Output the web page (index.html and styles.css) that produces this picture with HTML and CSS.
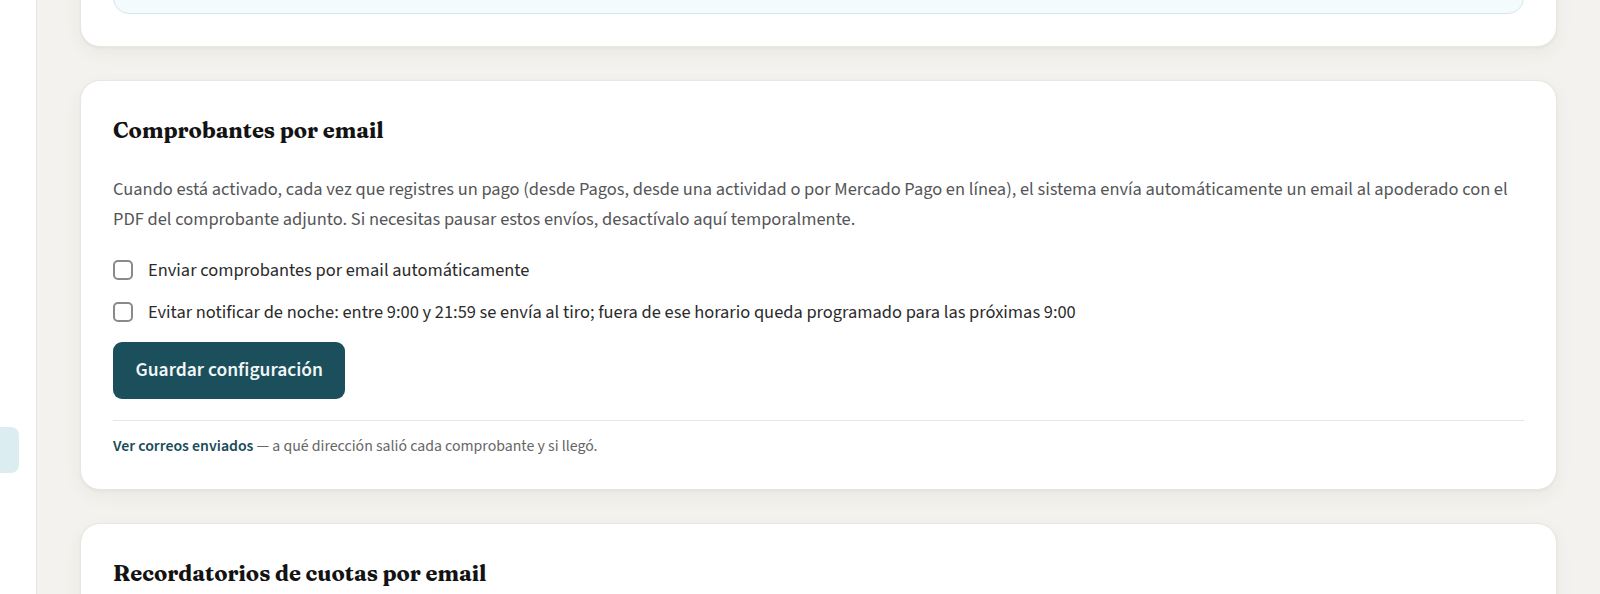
FILE: index.html
```html
<!DOCTYPE html>
<html lang="es">
<head>
    <meta charset="UTF-8">
    <meta name="viewport" content="width=device-width, initial-scale=1.0">
    <title>Configuración de emails</title>
    <link rel="stylesheet" href="styles.css">
</head>
<body>
    <div class="layout">
        <aside class="sidebar">
            <div class="nav-item active"></div>
        </aside>

        <main class="content">
            <section class="card card-prev">
                <div class="notice"></div>
            </section>

            <section class="card">
                <h2 class="card-title">Comprobantes por email</h2>
                <p class="card-text">Cuando está activado, cada vez que registres un pago (desde Pagos, desde una actividad o por Mercado Pago en línea), el sistema envía automáticamente un email al apoderado con el PDF del comprobante adjunto. Si necesitas pausar estos envíos, desactívalo aquí temporalmente.</p>

                <div class="options">
                    <label class="check-row">
                        <input type="checkbox">
                        <span>Enviar comprobantes por email automáticamente</span>
                    </label>
                    <label class="check-row">
                        <input type="checkbox">
                        <span>Evitar notificar de noche: entre 9:00 y 21:59 se envía al tiro; fuera de ese horario queda programado para las próximas 9:00</span>
                    </label>
                </div>

                <button class="btn-primary" type="button">Guardar configuración</button>

                <div class="card-footer">
                    <a href="#" class="footer-link">Ver correos enviados</a> — a qué dirección salió cada comprobante y si llegó.
                </div>
            </section>

            <section class="card">
                <h2 class="card-title">Recordatorios de cuotas por email</h2>
            </section>
        </main>
    </div>
</body>
</html>
```

FILE: styles.css
```css
* {
    box-sizing: border-box;
}
body {
    font-family: "Source Sans 3", Lato, "Liberation Sans", sans-serif;
    margin: 0;
    height: 594px;
    overflow: hidden;
    background-color: #f4f2ee;
    color: #2c2c2c;
}
.layout {
    display: flex;
    align-items: flex-start;
}
.sidebar {
    width: 37px;
    flex-shrink: 0;
    height: 594px;
    background: #fff;
    border-right: 1px solid #e7e4df;
    overflow: hidden;
    padding-top: 427px;
}
.nav-item {
    height: 46px;
    width: 39px;
    margin-left: -20px;
    border-radius: 8px;
}
.nav-item.active {
    background: #dcedf2;
}
.content {
    flex: 1;
    display: flex;
    flex-direction: column;
    gap: 33px;
    padding: 0 43px;
    margin-top: -60px;
}
.card {
    background: #fff;
    border: 1px solid #e9e6e0;
    border-radius: 20px;
    box-shadow: 0 1px 3px rgba(60, 50, 30, 0.05), 0 6px 18px rgba(60, 50, 30, 0.05);
    padding: 32px;
}
.notice {
    height: 41px;
    background: #f4fbfc;
    border: 1px solid #d2e7eb;
    border-radius: 16px;
}
.card-title {
    font-family: Fraunces, "Liberation Serif", serif;
    font-size: 21.8px;
    font-weight: 700;
    line-height: 35px;
    color: #131313;
    margin: 0 0 26px;
}
.card-text {
    font-size: 18.4px;
    line-height: 30px;
    color: #555657;
    margin: 0 0 21px;
}
.options {
    display: flex;
    flex-direction: column;
    gap: 12px;
}
.check-row {
    display: flex;
    align-items: center;
    gap: 15px;
    height: 30px;
    font-size: 18.4px;
    color: #2b2b2b;
}
.check-row input {
    appearance: none;
    margin: 0;
    width: 20px;
    height: 20px;
    border: 2px solid #8a8a8a;
    border-radius: 5px;
    background: #fff;
    flex-shrink: 0;
}
.btn-primary {
    display: block;
    margin-top: 15px;
    font-family: inherit;
    font-size: 19.5px;
    font-weight: 600;
    line-height: 27px;
    color: #f2f6f6;
    background: #1a4f5b;
    border: none;
    border-radius: 9px;
    padding: 15px 22.5px;
}
.card-footer {
    margin-top: 21px;
    border-top: 1px solid #e9e6e1;
    padding-top: 14px;
    font-size: 15.8px;
    line-height: 22px;
    color: #666;
}
.footer-link {
    color: #174c58;
    font-weight: 600;
    text-decoration: none;
}
```
